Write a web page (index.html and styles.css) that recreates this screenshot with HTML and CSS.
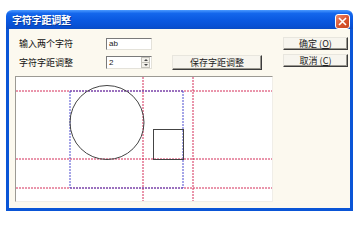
FILE: index.html
```html
<!DOCTYPE html>
<html>
<head>
<meta charset="utf-8">
<link rel="stylesheet" href="styles.css">
</head>
<body>
<div class="window">
  <div class="titlebar">
    <span class="title">字符字距调整</span>
    <span class="close"><svg width="9" height="9" viewBox="0 0 9 9"><path d="M1 1L8 8M8 1L1 8" stroke="#fff" stroke-width="1.6"/></svg></span>
  </div>
  <div class="client">
    <div class="main">
      <div class="row r1">
        <span class="label">输入两个字符</span>
        <div class="field">ab</div>
      </div>
      <div class="row r2">
        <span class="label">字符字距调整</span>
        <div class="field spin">
          <span class="val">2</span>
          <span class="spinbtns"><span class="sb"><i class="up"></i></span><span class="sb"><i class="dn"></i></span></span>
        </div>
        <button class="btn save">保存字距调整</button>
      </div>
      <div class="canvas">
        <svg class="draw" width="256" height="124" viewBox="0 0 256 124">
          <g class="guides red">
            <line x1="0" y1="14" x2="256" y2="14"/>
            <line x1="0" y1="82" x2="256" y2="82"/>
            <line x1="0" y1="111" x2="256" y2="111"/>
            <line x1="127" y1="0" x2="127" y2="124"/>
            <line x1="177" y1="0" x2="177" y2="124"/>
          </g>
          <g class="guides blue">
            <line x1="54" y1="14" x2="54" y2="111"/>
            <line x1="167" y1="14" x2="167" y2="111"/>
            <line x1="54" y1="14" x2="167" y2="14"/>
            <line x1="54" y1="111" x2="167" y2="111"/>
          </g>
          <circle cx="91" cy="45.5" r="37" fill="none" stroke="#444" stroke-width="1"/>
          <rect x="137.5" y="52.5" width="30" height="30" fill="none" stroke="#444" stroke-width="1"/>
        </svg>
      </div>
    </div>
    <div class="side">
      <button class="btn">确定 (<u>O</u>)</button>
      <button class="btn">取消 (<u>C</u>)</button>
    </div>
  </div>
</div>
</body>
</html>
```
FILE: styles.css
```css
html, body {
  margin: 0;
  padding: 0;
  background: #ffffff;
}
body {
  padding: 10px 0 0 6px;
  font-family: "Noto Sans CJK SC", "Liberation Sans", sans-serif;
}
.window {
  width: 347px;
}
.titlebar {
  height: 19px;
  border-radius: 6px 6px 0 0;
  background: linear-gradient(#4b9aff 0%, #1467ec 18%, #0a58e0 55%, #0850d4 85%, #0a4cc4 100%);
  display: flex;
  align-items: center;
  justify-content: space-between;
  padding: 0 3px 0 6px;
  box-sizing: border-box;
}
.title {
  color: #ffffff;
  font-size: 10px;
  font-weight: bold;
  line-height: 12px;
  letter-spacing: -0.2px;
  text-shadow: 1px 1px 0 #0a3a9a;
}
.close {
  width: 15px;
  height: 15px;
  box-sizing: border-box;
  border: 1px solid #ffffff;
  border-radius: 3px;
  background: linear-gradient(135deg, #f08a6a, #d8532e 55%, #c8441e);
  display: flex;
  align-items: center;
  justify-content: center;
  margin-top: 3px;
}
.client {
  display: flex;
  background: #fcf9ef;
  border: 3px solid #0a55d6;
  border-top: none;
  padding: 8px 2px 6px 0;
}
.main {
  width: 264px;
  display: flex;
  flex-direction: column;
}
.row {
  display: flex;
  align-items: center;
}
.r1 {
  margin-top: 1px;
  height: 12px;
}
.r2 {
  margin-top: 5px;
  height: 15px;
}
.label {
  width: 87px;
  padding-left: 10px;
  font-size: 9px;
  line-height: 12px;
  color: #111;
  white-space: nowrap;
}
.field {
  width: 46px;
  height: 12px;
  box-sizing: border-box;
  background: #ffffff;
  border-top: 1px solid #7a7a7a;
  border-left: 1px solid #7a7a7a;
  border-right: 1px solid #e4e2da;
  border-bottom: 1px solid #e4e2da;
  font-family: "Liberation Sans", sans-serif;
  font-size: 8px;
  line-height: 10px;
  padding-left: 2px;
  color: #222;
}
.spin {
  height: 13px;
  display: flex;
  justify-content: space-between;
  padding-right: 1px;
}
.val {
  line-height: 11px;
}
.spinbtns {
  width: 9px;
  display: flex;
  flex-direction: column;
}
.sb {
  flex: 1;
  background: #f2f0ea;
  border: 1px solid #c4c2ba;
  box-sizing: border-box;
  display: flex;
  align-items: center;
  justify-content: center;
}
.sb + .sb {
  border-top: none;
}
.up {
  width: 0;
  height: 0;
  border-left: 2px solid transparent;
  border-right: 2px solid transparent;
  border-bottom: 2px solid #444;
}
.dn {
  width: 0;
  height: 0;
  border-left: 2px solid transparent;
  border-right: 2px solid transparent;
  border-top: 2px solid #444;
}
.btn {
  font-family: "Noto Sans CJK SC", "Liberation Sans", sans-serif;
  font-size: 9px;
  line-height: 10px;
  color: #222;
  background: #f7f5ee;
  border-top: 1px solid #e8e6de;
  border-left: 1px solid #e8e6de;
  border-right: 1px solid #3c3c3c;
  border-bottom: 1px solid #3c3c3c;
  box-shadow: inset -1px -1px 0 #9a9890;
  padding: 0;
  margin: 0;
  box-sizing: border-box;
  display: flex;
  align-items: center;
  justify-content: center;
  white-space: nowrap;
}
.btn u {
  text-decoration: underline;
}
.save {
  margin-left: 20px;
  width: 90px;
  height: 15px;
}
.canvas {
  margin-top: 6px;
  margin-left: 6px;
  width: 258px;
  height: 126px;
  box-sizing: border-box;
  background: #ffffff;
  border-top: 1px solid #9c9a94;
  border-left: 1px solid #9c9a94;
  border-right: 1px solid #f0eee8;
  border-bottom: 1px solid #f0eee8;
  overflow: hidden;
}
.draw {
  display: block;
}
.guides {
  fill: none;
  stroke-width: 1;
  stroke-dasharray: 2 1;
}
.red {
  stroke: #d42c58;
}
.blue {
  stroke: #4c4cd0;
}
.side {
  margin-left: 10px;
  width: 65px;
  display: flex;
  flex-direction: column;
  gap: 4px;
}
.side .btn {
  height: 13px;
  width: 65px;
}
```
